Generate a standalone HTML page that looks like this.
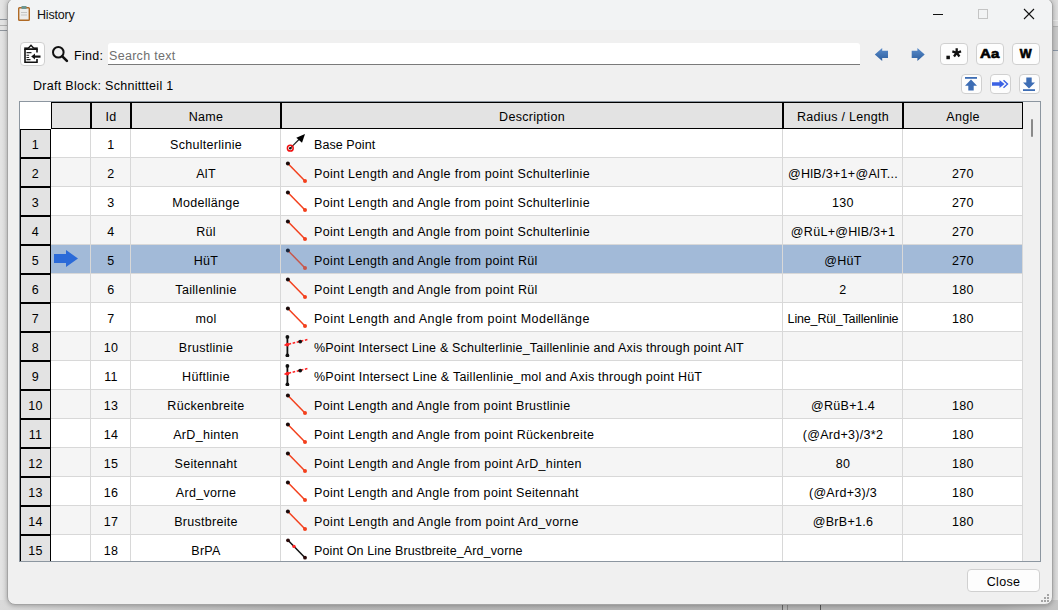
<!DOCTYPE html><html><head><meta charset="utf-8"><style>
*{box-sizing:border-box;margin:0;padding:0}
html,body{width:1058px;height:610px;overflow:hidden;background:#dcdcdc;font-family:"Liberation Sans",sans-serif;font-size:12.5px;color:#000}
.a{position:absolute}
.t{position:absolute;white-space:nowrap;letter-spacing:0.3px;line-height:15px}
.btn{position:absolute;background:#fdfdfd;border:1px solid #d0d0d0;border-radius:4px}
</style></head><body>

<div class="a" style="left:0;top:0;width:1058px;height:610px;background:linear-gradient(90deg,#e4e4e4 0,#dadada 7px,#dadada 1050px,#d6d6d6 1053px,#dcdcdc 1058px)"></div>
<div class="a" style="left:0;top:19px;width:8px;height:12px;background:#e2e2e2;border-top:1px solid #8f959c;border-bottom:1px solid #8f959c"></div>
<div class="a" style="left:0;top:25px;width:8px;height:1px;background:#b0b0b0"></div>
<div class="a" style="left:1050px;top:20px;width:8px;height:1px;background:#e8e8e8"></div>
<div class="a" style="left:1050px;top:26px;width:8px;height:25px;background:#c8c8c8;border-top:1px solid #b0b0b0;border-bottom:1px solid #8a96a6"></div>
<div class="a" style="left:0;top:600px;width:1058px;height:10px;background:linear-gradient(90deg,#dadada 0,#cbcbcb 100px,#b8b8b8 280px,#b4b4b4 1000px,#c4c4c4 1058px)"></div>
<div class="a" style="left:782px;top:600px;width:1px;height:10px;background:#666"></div>
<div class="a" style="left:787px;top:600px;width:1px;height:10px;background:#888"></div>
<div class="a" style="left:820px;top:600px;width:1px;height:10px;background:#555"></div>
<div class="a" style="left:7px;top:-2px;width:1046px;height:607px;background:#f0f0f0;border:1px solid #a4a4a4;border-radius:8px;overflow:hidden;box-shadow:0 1px 4px rgba(0,0,0,0.25)">
<div class="a" style="left:0;top:0;width:1046px;height:31px;background:#f2f3f4"></div>
</div>
<svg class="a" style="left:18px;top:6px" width="12" height="15" viewBox="0 0 12 15"><rect x="0.7" y="1.7" width="10.6" height="12.6" rx="0.8" fill="#ececec" stroke="#b06a25" stroke-width="1.4"/><rect x="3.5" y="0" width="5" height="3" fill="#6e9690"/><line x1="3" y1="6.5" x2="9" y2="6.5" stroke="#c4c4c4"/><line x1="3" y1="9" x2="9" y2="9" stroke="#c4c4c4"/></svg>
<div class="t" style="left:37px;top:8px;font-size:12.5px;letter-spacing:-0.2px;color:#111">History</div>
<div class="a" style="left:933px;top:14px;width:10px;height:1px;background:#111"></div>
<div class="a" style="left:978px;top:9px;width:10px;height:10px;border:1px solid #c4c4c4"></div>
<svg class="a" style="left:1023px;top:8px" width="12" height="12" viewBox="0 0 12 12"><path d="M1 1L11 11M11 1L1 11" stroke="#111" stroke-width="1.1"/></svg>
<div class="btn" style="left:20px;top:42px;width:25px;height:24px"></div>
<svg class="a" style="left:22px;top:43px" width="20" height="21" viewBox="0 0 20 21"><path d="M3 6v13.3h12v-3.3M15 9.5V6" fill="none" stroke="#111" stroke-width="1.6"/><rect x="2.2" y="4.4" width="13.6" height="2.6" fill="#111"/><path d="M6.3 5.2L9 2.2L11.7 5.2" fill="#fff" stroke="#111" stroke-width="1.4"/><path d="M4.5 9.6h5M4.5 12.3h2.6M4.5 14.5h2.6M4.5 16.6h4" stroke="#222" stroke-width="1.1"/><path d="M11 13.6h7.5" stroke="#111" stroke-width="2.2"/><path d="M9.2 13.6L13 10.6V16.6z" fill="#111"/></svg>
<svg class="a" style="left:50px;top:44px" width="20" height="20" viewBox="0 0 20 20"><circle cx="8.3" cy="8.2" r="5.3" fill="none" stroke="#111" stroke-width="2"/><path d="M12.3 12.3l4.6 4.6" stroke="#111" stroke-width="2.6" stroke-linecap="round"/></svg>
<div class="t" style="left:74px;top:49px">Find:</div>
<div class="a" style="left:108px;top:43px;width:752px;height:22px;background:#fff;border-bottom:1px solid #7a7a7a;border-radius:3px 3px 0 0"></div>
<div class="t" style="left:109px;top:49px;color:#6f6f6f">Search text</div>
<svg class="a" style="left:874px;top:47px" width="15" height="16" viewBox="0 0 15 16"><defs><linearGradient id="ag" x1="0" y1="0" x2="0" y2="1"><stop offset="0" stop-color="#5a8ccb"/><stop offset="1" stop-color="#2d5e9e"/></linearGradient></defs><path d="M0.8 7.5L8.2 1V3.8H14V10.9H8.2V14z" fill="url(#ag)"/></svg>
<svg class="a" style="left:911px;top:47px" width="15" height="16" viewBox="0 0 15 16"><path d="M13.7 7.5L6.4 1V3.8H0.7V10.9H6.4V14z" fill="url(#ag)"/></svg>
<div class="btn" style="left:940px;top:43px;width:28px;height:22px"></div>
<div class="a" style="left:940px;top:47px;width:28px;text-align:center;font-weight:bold;font-size:12px;line-height:14px;-webkit-text-stroke:0.6px #000"><span style="display:inline-block;transform:scaleX(1.0)"></span></div>
<div class="btn" style="left:976px;top:43px;width:28px;height:22px"></div>
<div class="a" style="left:976px;top:47px;width:28px;text-align:center;font-weight:bold;font-size:12px;line-height:14px;-webkit-text-stroke:0.6px #000"><span style="display:inline-block;transform:scaleX(1.25)">Aa</span></div>
<div class="btn" style="left:1012px;top:43px;width:28px;height:22px"></div>
<div class="a" style="left:1012px;top:47px;width:28px;text-align:center;font-weight:bold;font-size:12px;line-height:14px;-webkit-text-stroke:0.6px #000"><span style="display:inline-block;transform:scaleX(1.05)">W</span></div>
<svg class="a" style="left:944px;top:46px" width="20" height="16" viewBox="0 0 20 16"><rect x="2.4" y="9.7" width="3.5" height="3.5" fill="#111"/><path d="M12.7 6.8L12.70 2.20M12.7 6.8L17.07 5.38M12.7 6.8L15.40 10.52M12.7 6.8L10.00 10.52M12.7 6.8L8.33 5.38" stroke="#111" stroke-width="2.3"/></svg>
<div class="t" style="left:33px;top:79px">Draft Block:</div>
<div class="t" style="left:105px;top:79px">Schnittteil 1</div>
<div class="btn" style="left:961px;top:74px;width:21px;height:20px"></div>
<div class="btn" style="left:990px;top:74px;width:21px;height:20px"></div>
<div class="btn" style="left:1019px;top:74px;width:21px;height:20px"></div>
<svg class="a" style="left:964px;top:77px" width="14" height="14" viewBox="0 0 14 14"><rect x="1" y="0" width="12" height="1.8" fill="#3d6db4"/><path d="M7 2.5L1 8.8h3.3V13.5h5.4V8.8H13z" fill="#3d6db4"/></svg>
<svg class="a" style="left:991px;top:77px" width="18" height="14" viewBox="0 0 18 14"><path d="M1 5.3h7.5V3l5 4-5 4V8.8H1z" fill="#3b62e4"/><path d="M12.5 3.3l4 3.7-4 3.7" fill="none" stroke="#3b62e4" stroke-width="1.4"/></svg>
<svg class="a" style="left:1022px;top:77px" width="14" height="14" viewBox="0 0 14 14"><rect x="1" y="12.2" width="12" height="1.8" fill="#3d6db4"/><path d="M7 11.5L1 5.5h3.3V0.5h5.4V5.5H13z" fill="#3d6db4"/></svg>
<div class="a" style="left:19px;top:101px;width:1022px;height:461px;border:1px solid #8c96a0;background:#f0f0f0"></div>
<div class="a" style="left:20px;top:102px;width:31px;height:27px;background:#fff"></div>
<div class="a" style="left:51px;top:102px;width:40px;height:27px;background:#e3e3e3;border:1px solid #000"></div>
<div class="a" style="left:91px;top:102px;width:40px;height:27px;background:#e3e3e3;border:1px solid #000"></div>
<div class="t" style="left:91px;top:110px;width:40px;text-align:center">Id</div>
<div class="a" style="left:131px;top:102px;width:150px;height:27px;background:#e3e3e3;border:1px solid #000"></div>
<div class="t" style="left:131px;top:110px;width:150px;text-align:center">Name</div>
<div class="a" style="left:281px;top:102px;width:502px;height:27px;background:#e3e3e3;border:1px solid #000"></div>
<div class="t" style="left:281px;top:110px;width:502px;text-align:center">Description</div>
<div class="a" style="left:783px;top:102px;width:120px;height:27px;background:#e3e3e3;border:1px solid #000"></div>
<div class="t" style="left:783px;top:110px;width:120px;text-align:center">Radius / Length</div>
<div class="a" style="left:903px;top:102px;width:120px;height:27px;background:#e3e3e3;border:1px solid #000"></div>
<div class="t" style="left:903px;top:110px;width:120px;text-align:center">Angle</div>
<div class="a" style="left:20px;top:129px;width:1003px;height:432px;overflow:hidden">
<div class="a" style="left:31px;top:0px;width:972px;height:29px;background:#ffffff"></div>
<div class="a" style="left:31px;top:28px;width:972px;height:1px;background:#d8d8d8"></div>
<div class="a" style="left:70px;top:0px;width:1px;height:29px;background:#d8d8d8"></div>
<div class="a" style="left:110px;top:0px;width:1px;height:29px;background:#d8d8d8"></div>
<div class="a" style="left:260px;top:0px;width:1px;height:29px;background:#d8d8d8"></div>
<div class="a" style="left:762px;top:0px;width:1px;height:29px;background:#d8d8d8"></div>
<div class="a" style="left:882px;top:0px;width:1px;height:29px;background:#d8d8d8"></div>
<div class="a" style="left:1002px;top:0px;width:1px;height:29px;background:#d8d8d8"></div>
<div class="a" style="left:0;top:0px;width:31px;height:29px;background:#e3e3e3;border:1px solid #000"></div>
<div class="t" style="left:0;top:9px;width:31px;text-align:center">1</div>
<div class="t" style="left:71px;top:9px;width:40px;text-align:center">1</div>
<div class="t" style="left:111px;top:9px;width:150px;text-align:center">Schulterlinie</div>
<div class="a" style="left:264px;top:3px;width:26px;height:22px"><svg width="26" height="22" viewBox="0 0 26 22"><line x1="6.3" y1="16.2" x2="15.5" y2="7" stroke="#222" stroke-width="1.2"/><polygon points="21,2 12.3,5.8 18,10.8" fill="#000"/><circle cx="6.3" cy="16.2" r="2.9" fill="none" stroke="#f01010" stroke-width="1.5"/><circle cx="6.3" cy="16.2" r="1.3" fill="#111"/></svg></div>
<div class="t" style="left:294px;top:9px;letter-spacing:0.078px">Base Point</div>
<div class="t" style="left:763px;top:9px;width:120px;text-align:center"></div>
<div class="t" style="left:883px;top:9px;width:120px;text-align:center"></div>
<div class="a" style="left:31px;top:29px;width:972px;height:29px;background:#f5f5f5"></div>
<div class="a" style="left:31px;top:57px;width:972px;height:1px;background:#d8d8d8"></div>
<div class="a" style="left:70px;top:29px;width:1px;height:29px;background:#d8d8d8"></div>
<div class="a" style="left:110px;top:29px;width:1px;height:29px;background:#d8d8d8"></div>
<div class="a" style="left:260px;top:29px;width:1px;height:29px;background:#d8d8d8"></div>
<div class="a" style="left:762px;top:29px;width:1px;height:29px;background:#d8d8d8"></div>
<div class="a" style="left:882px;top:29px;width:1px;height:29px;background:#d8d8d8"></div>
<div class="a" style="left:1002px;top:29px;width:1px;height:29px;background:#d8d8d8"></div>
<div class="a" style="left:0;top:29px;width:31px;height:29px;background:#e3e3e3;border:1px solid #000"></div>
<div class="t" style="left:0;top:38px;width:31px;text-align:center">2</div>
<div class="t" style="left:71px;top:38px;width:40px;text-align:center">2</div>
<div class="t" style="left:111px;top:38px;width:150px;text-align:center">AlT</div>
<div class="a" style="left:264px;top:32px;width:26px;height:22px"><svg width="26" height="22" viewBox="0 0 26 22"><line x1="3.9" y1="2.4" x2="21" y2="20" stroke="#f3401d" stroke-width="1.5"/><circle cx="3.9" cy="2.4" r="2" fill="#1a0a0a"/><circle cx="21" cy="20" r="2" fill="#f3401d"/></svg></div>
<div class="t" style="left:294px;top:38px;letter-spacing:0.343px">Point Length and Angle from point Schulterlinie</div>
<div class="t" style="left:763px;top:38px;width:120px;text-align:center">@HlB/3+1+@AlT...</div>
<div class="t" style="left:883px;top:38px;width:120px;text-align:center">270</div>
<div class="a" style="left:31px;top:58px;width:972px;height:29px;background:#ffffff"></div>
<div class="a" style="left:31px;top:86px;width:972px;height:1px;background:#d8d8d8"></div>
<div class="a" style="left:70px;top:58px;width:1px;height:29px;background:#d8d8d8"></div>
<div class="a" style="left:110px;top:58px;width:1px;height:29px;background:#d8d8d8"></div>
<div class="a" style="left:260px;top:58px;width:1px;height:29px;background:#d8d8d8"></div>
<div class="a" style="left:762px;top:58px;width:1px;height:29px;background:#d8d8d8"></div>
<div class="a" style="left:882px;top:58px;width:1px;height:29px;background:#d8d8d8"></div>
<div class="a" style="left:1002px;top:58px;width:1px;height:29px;background:#d8d8d8"></div>
<div class="a" style="left:0;top:58px;width:31px;height:29px;background:#e3e3e3;border:1px solid #000"></div>
<div class="t" style="left:0;top:67px;width:31px;text-align:center">3</div>
<div class="t" style="left:71px;top:67px;width:40px;text-align:center">3</div>
<div class="t" style="left:111px;top:67px;width:150px;text-align:center">Modellänge</div>
<div class="a" style="left:264px;top:61px;width:26px;height:22px"><svg width="26" height="22" viewBox="0 0 26 22"><line x1="3.9" y1="2.4" x2="21" y2="20" stroke="#f3401d" stroke-width="1.5"/><circle cx="3.9" cy="2.4" r="2" fill="#1a0a0a"/><circle cx="21" cy="20" r="2" fill="#f3401d"/></svg></div>
<div class="t" style="left:294px;top:67px;letter-spacing:0.343px">Point Length and Angle from point Schulterlinie</div>
<div class="t" style="left:763px;top:67px;width:120px;text-align:center">130</div>
<div class="t" style="left:883px;top:67px;width:120px;text-align:center">270</div>
<div class="a" style="left:31px;top:87px;width:972px;height:29px;background:#f5f5f5"></div>
<div class="a" style="left:31px;top:115px;width:972px;height:1px;background:#d8d8d8"></div>
<div class="a" style="left:70px;top:87px;width:1px;height:29px;background:#d8d8d8"></div>
<div class="a" style="left:110px;top:87px;width:1px;height:29px;background:#d8d8d8"></div>
<div class="a" style="left:260px;top:87px;width:1px;height:29px;background:#d8d8d8"></div>
<div class="a" style="left:762px;top:87px;width:1px;height:29px;background:#d8d8d8"></div>
<div class="a" style="left:882px;top:87px;width:1px;height:29px;background:#d8d8d8"></div>
<div class="a" style="left:1002px;top:87px;width:1px;height:29px;background:#d8d8d8"></div>
<div class="a" style="left:0;top:87px;width:31px;height:29px;background:#e3e3e3;border:1px solid #000"></div>
<div class="t" style="left:0;top:96px;width:31px;text-align:center">4</div>
<div class="t" style="left:71px;top:96px;width:40px;text-align:center">4</div>
<div class="t" style="left:111px;top:96px;width:150px;text-align:center">Rül</div>
<div class="a" style="left:264px;top:90px;width:26px;height:22px"><svg width="26" height="22" viewBox="0 0 26 22"><line x1="3.9" y1="2.4" x2="21" y2="20" stroke="#f3401d" stroke-width="1.5"/><circle cx="3.9" cy="2.4" r="2" fill="#1a0a0a"/><circle cx="21" cy="20" r="2" fill="#f3401d"/></svg></div>
<div class="t" style="left:294px;top:96px;letter-spacing:0.343px">Point Length and Angle from point Schulterlinie</div>
<div class="t" style="left:763px;top:96px;width:120px;text-align:center">@RüL+@HlB/3+1</div>
<div class="t" style="left:883px;top:96px;width:120px;text-align:center">270</div>
<div class="a" style="left:31px;top:116px;width:972px;height:29px;background:#a2bad8"></div>
<div class="a" style="left:31px;top:144px;width:972px;height:1px;background:#d8d8d8"></div>
<div class="a" style="left:70px;top:116px;width:1px;height:29px;background:#d8d8d8"></div>
<div class="a" style="left:110px;top:116px;width:1px;height:29px;background:#d8d8d8"></div>
<div class="a" style="left:260px;top:116px;width:1px;height:29px;background:#d8d8d8"></div>
<div class="a" style="left:762px;top:116px;width:1px;height:29px;background:#d8d8d8"></div>
<div class="a" style="left:882px;top:116px;width:1px;height:29px;background:#d8d8d8"></div>
<div class="a" style="left:1002px;top:116px;width:1px;height:29px;background:#d8d8d8"></div>
<div class="a" style="left:0;top:116px;width:31px;height:29px;background:#e3e3e3;border:1px solid #000"></div>
<div class="t" style="left:0;top:125px;width:31px;text-align:center">5</div>
<svg class="a" style="left:34px;top:121px" width="25" height="18" viewBox="0 0 25 18"><path d="M0 4h12V0l12 8.5L12 17v-4H0z" fill="#2b6ad8"/></svg>
<div class="t" style="left:71px;top:125px;width:40px;text-align:center">5</div>
<div class="t" style="left:111px;top:125px;width:150px;text-align:center">HüT</div>
<div class="a" style="left:264px;top:119px;width:26px;height:22px"><svg width="26" height="22" viewBox="0 0 26 22"><line x1="3.9" y1="2.4" x2="21" y2="20" stroke="#c8574b" stroke-width="1.5"/><circle cx="3.9" cy="2.4" r="2" fill="#18243a"/><circle cx="21" cy="20" r="2" fill="#c8574b"/></svg></div>
<div class="t" style="left:294px;top:125px;letter-spacing:0.356px">Point Length and Angle from point Rül</div>
<div class="t" style="left:763px;top:125px;width:120px;text-align:center">@HüT</div>
<div class="t" style="left:883px;top:125px;width:120px;text-align:center">270</div>
<div class="a" style="left:31px;top:145px;width:972px;height:29px;background:#f5f5f5"></div>
<div class="a" style="left:31px;top:173px;width:972px;height:1px;background:#d8d8d8"></div>
<div class="a" style="left:70px;top:145px;width:1px;height:29px;background:#d8d8d8"></div>
<div class="a" style="left:110px;top:145px;width:1px;height:29px;background:#d8d8d8"></div>
<div class="a" style="left:260px;top:145px;width:1px;height:29px;background:#d8d8d8"></div>
<div class="a" style="left:762px;top:145px;width:1px;height:29px;background:#d8d8d8"></div>
<div class="a" style="left:882px;top:145px;width:1px;height:29px;background:#d8d8d8"></div>
<div class="a" style="left:1002px;top:145px;width:1px;height:29px;background:#d8d8d8"></div>
<div class="a" style="left:0;top:145px;width:31px;height:29px;background:#e3e3e3;border:1px solid #000"></div>
<div class="t" style="left:0;top:154px;width:31px;text-align:center">6</div>
<div class="t" style="left:71px;top:154px;width:40px;text-align:center">6</div>
<div class="t" style="left:111px;top:154px;width:150px;text-align:center">Taillenlinie</div>
<div class="a" style="left:264px;top:148px;width:26px;height:22px"><svg width="26" height="22" viewBox="0 0 26 22"><line x1="3.9" y1="2.4" x2="21" y2="20" stroke="#f3401d" stroke-width="1.5"/><circle cx="3.9" cy="2.4" r="2" fill="#1a0a0a"/><circle cx="21" cy="20" r="2" fill="#f3401d"/></svg></div>
<div class="t" style="left:294px;top:154px;letter-spacing:0.356px">Point Length and Angle from point Rül</div>
<div class="t" style="left:763px;top:154px;width:120px;text-align:center">2</div>
<div class="t" style="left:883px;top:154px;width:120px;text-align:center">180</div>
<div class="a" style="left:31px;top:174px;width:972px;height:29px;background:#ffffff"></div>
<div class="a" style="left:31px;top:202px;width:972px;height:1px;background:#d8d8d8"></div>
<div class="a" style="left:70px;top:174px;width:1px;height:29px;background:#d8d8d8"></div>
<div class="a" style="left:110px;top:174px;width:1px;height:29px;background:#d8d8d8"></div>
<div class="a" style="left:260px;top:174px;width:1px;height:29px;background:#d8d8d8"></div>
<div class="a" style="left:762px;top:174px;width:1px;height:29px;background:#d8d8d8"></div>
<div class="a" style="left:882px;top:174px;width:1px;height:29px;background:#d8d8d8"></div>
<div class="a" style="left:1002px;top:174px;width:1px;height:29px;background:#d8d8d8"></div>
<div class="a" style="left:0;top:174px;width:31px;height:29px;background:#e3e3e3;border:1px solid #000"></div>
<div class="t" style="left:0;top:183px;width:31px;text-align:center">7</div>
<div class="t" style="left:71px;top:183px;width:40px;text-align:center">7</div>
<div class="t" style="left:111px;top:183px;width:150px;text-align:center">mol</div>
<div class="a" style="left:264px;top:177px;width:26px;height:22px"><svg width="26" height="22" viewBox="0 0 26 22"><line x1="3.9" y1="2.4" x2="21" y2="20" stroke="#f3401d" stroke-width="1.5"/><circle cx="3.9" cy="2.4" r="2" fill="#1a0a0a"/><circle cx="21" cy="20" r="2" fill="#f3401d"/></svg></div>
<div class="t" style="left:294px;top:183px;letter-spacing:0.440px">Point Length and Angle from point Modellänge</div>
<div class="t" style="left:763px;top:183px;width:120px;text-align:center;letter-spacing:-0.15px">Line_Rül_Taillenlinie</div>
<div class="t" style="left:883px;top:183px;width:120px;text-align:center">180</div>
<div class="a" style="left:31px;top:203px;width:972px;height:29px;background:#f5f5f5"></div>
<div class="a" style="left:31px;top:231px;width:972px;height:1px;background:#d8d8d8"></div>
<div class="a" style="left:70px;top:203px;width:1px;height:29px;background:#d8d8d8"></div>
<div class="a" style="left:110px;top:203px;width:1px;height:29px;background:#d8d8d8"></div>
<div class="a" style="left:260px;top:203px;width:1px;height:29px;background:#d8d8d8"></div>
<div class="a" style="left:762px;top:203px;width:1px;height:29px;background:#d8d8d8"></div>
<div class="a" style="left:882px;top:203px;width:1px;height:29px;background:#d8d8d8"></div>
<div class="a" style="left:1002px;top:203px;width:1px;height:29px;background:#d8d8d8"></div>
<div class="a" style="left:0;top:203px;width:31px;height:29px;background:#e3e3e3;border:1px solid #000"></div>
<div class="t" style="left:0;top:212px;width:31px;text-align:center">8</div>
<div class="t" style="left:71px;top:212px;width:40px;text-align:center">10</div>
<div class="t" style="left:111px;top:212px;width:150px;text-align:center">Brustlinie</div>
<div class="a" style="left:264px;top:206px;width:26px;height:22px"><svg width="26" height="22" viewBox="0 0 26 22"><line x1="3.4" y1="1.5" x2="3.4" y2="20.5" stroke="#111" stroke-width="1.8"/><circle cx="3.4" cy="1.9" r="1.9" fill="#111"/><circle cx="3.4" cy="20.4" r="1.9" fill="#111"/><line x1="0.5" y1="10.2" x2="24" y2="4.4" stroke="#f22" stroke-width="1.6" stroke-dasharray="2.6,1.6"/><circle cx="3.4" cy="9.6" r="1.9" fill="#f22"/><circle cx="16.2" cy="6.6" r="1.9" fill="#111"/></svg></div>
<div class="t" style="left:294px;top:212px;letter-spacing:0.195px">%Point Intersect Line &amp; Schulterlinie_Taillenlinie and Axis through point AlT</div>
<div class="t" style="left:763px;top:212px;width:120px;text-align:center"></div>
<div class="t" style="left:883px;top:212px;width:120px;text-align:center"></div>
<div class="a" style="left:31px;top:232px;width:972px;height:29px;background:#ffffff"></div>
<div class="a" style="left:31px;top:260px;width:972px;height:1px;background:#d8d8d8"></div>
<div class="a" style="left:70px;top:232px;width:1px;height:29px;background:#d8d8d8"></div>
<div class="a" style="left:110px;top:232px;width:1px;height:29px;background:#d8d8d8"></div>
<div class="a" style="left:260px;top:232px;width:1px;height:29px;background:#d8d8d8"></div>
<div class="a" style="left:762px;top:232px;width:1px;height:29px;background:#d8d8d8"></div>
<div class="a" style="left:882px;top:232px;width:1px;height:29px;background:#d8d8d8"></div>
<div class="a" style="left:1002px;top:232px;width:1px;height:29px;background:#d8d8d8"></div>
<div class="a" style="left:0;top:232px;width:31px;height:29px;background:#e3e3e3;border:1px solid #000"></div>
<div class="t" style="left:0;top:241px;width:31px;text-align:center">9</div>
<div class="t" style="left:71px;top:241px;width:40px;text-align:center">11</div>
<div class="t" style="left:111px;top:241px;width:150px;text-align:center">Hüftlinie</div>
<div class="a" style="left:264px;top:235px;width:26px;height:22px"><svg width="26" height="22" viewBox="0 0 26 22"><line x1="3.4" y1="1.5" x2="3.4" y2="20.5" stroke="#111" stroke-width="1.8"/><circle cx="3.4" cy="1.9" r="1.9" fill="#111"/><circle cx="3.4" cy="20.4" r="1.9" fill="#111"/><line x1="0.5" y1="10.2" x2="24" y2="4.4" stroke="#f22" stroke-width="1.6" stroke-dasharray="2.6,1.6"/><circle cx="3.4" cy="9.6" r="1.9" fill="#f22"/><circle cx="16.2" cy="6.6" r="1.9" fill="#111"/></svg></div>
<div class="t" style="left:294px;top:241px;letter-spacing:0.239px">%Point Intersect Line &amp; Taillenlinie_mol and Axis through point HüT</div>
<div class="t" style="left:763px;top:241px;width:120px;text-align:center"></div>
<div class="t" style="left:883px;top:241px;width:120px;text-align:center"></div>
<div class="a" style="left:31px;top:261px;width:972px;height:29px;background:#f5f5f5"></div>
<div class="a" style="left:31px;top:289px;width:972px;height:1px;background:#d8d8d8"></div>
<div class="a" style="left:70px;top:261px;width:1px;height:29px;background:#d8d8d8"></div>
<div class="a" style="left:110px;top:261px;width:1px;height:29px;background:#d8d8d8"></div>
<div class="a" style="left:260px;top:261px;width:1px;height:29px;background:#d8d8d8"></div>
<div class="a" style="left:762px;top:261px;width:1px;height:29px;background:#d8d8d8"></div>
<div class="a" style="left:882px;top:261px;width:1px;height:29px;background:#d8d8d8"></div>
<div class="a" style="left:1002px;top:261px;width:1px;height:29px;background:#d8d8d8"></div>
<div class="a" style="left:0;top:261px;width:31px;height:29px;background:#e3e3e3;border:1px solid #000"></div>
<div class="t" style="left:0;top:270px;width:31px;text-align:center">10</div>
<div class="t" style="left:71px;top:270px;width:40px;text-align:center">13</div>
<div class="t" style="left:111px;top:270px;width:150px;text-align:center">Rückenbreite</div>
<div class="a" style="left:264px;top:264px;width:26px;height:22px"><svg width="26" height="22" viewBox="0 0 26 22"><line x1="3.9" y1="2.4" x2="21" y2="20" stroke="#f3401d" stroke-width="1.5"/><circle cx="3.9" cy="2.4" r="2" fill="#1a0a0a"/><circle cx="21" cy="20" r="2" fill="#f3401d"/></svg></div>
<div class="t" style="left:294px;top:270px;letter-spacing:0.300px">Point Length and Angle from point Brustlinie</div>
<div class="t" style="left:763px;top:270px;width:120px;text-align:center">@RüB+1.4</div>
<div class="t" style="left:883px;top:270px;width:120px;text-align:center">180</div>
<div class="a" style="left:31px;top:290px;width:972px;height:29px;background:#ffffff"></div>
<div class="a" style="left:31px;top:318px;width:972px;height:1px;background:#d8d8d8"></div>
<div class="a" style="left:70px;top:290px;width:1px;height:29px;background:#d8d8d8"></div>
<div class="a" style="left:110px;top:290px;width:1px;height:29px;background:#d8d8d8"></div>
<div class="a" style="left:260px;top:290px;width:1px;height:29px;background:#d8d8d8"></div>
<div class="a" style="left:762px;top:290px;width:1px;height:29px;background:#d8d8d8"></div>
<div class="a" style="left:882px;top:290px;width:1px;height:29px;background:#d8d8d8"></div>
<div class="a" style="left:1002px;top:290px;width:1px;height:29px;background:#d8d8d8"></div>
<div class="a" style="left:0;top:290px;width:31px;height:29px;background:#e3e3e3;border:1px solid #000"></div>
<div class="t" style="left:0;top:299px;width:31px;text-align:center">11</div>
<div class="t" style="left:71px;top:299px;width:40px;text-align:center">14</div>
<div class="t" style="left:111px;top:299px;width:150px;text-align:center">ArD_hinten</div>
<div class="a" style="left:264px;top:293px;width:26px;height:22px"><svg width="26" height="22" viewBox="0 0 26 22"><line x1="3.9" y1="2.4" x2="21" y2="20" stroke="#f3401d" stroke-width="1.5"/><circle cx="3.9" cy="2.4" r="2" fill="#1a0a0a"/><circle cx="21" cy="20" r="2" fill="#f3401d"/></svg></div>
<div class="t" style="left:294px;top:299px;letter-spacing:0.322px">Point Length and Angle from point Rückenbreite</div>
<div class="t" style="left:763px;top:299px;width:120px;text-align:center">(@Ard+3)/3*2</div>
<div class="t" style="left:883px;top:299px;width:120px;text-align:center">180</div>
<div class="a" style="left:31px;top:319px;width:972px;height:29px;background:#f5f5f5"></div>
<div class="a" style="left:31px;top:347px;width:972px;height:1px;background:#d8d8d8"></div>
<div class="a" style="left:70px;top:319px;width:1px;height:29px;background:#d8d8d8"></div>
<div class="a" style="left:110px;top:319px;width:1px;height:29px;background:#d8d8d8"></div>
<div class="a" style="left:260px;top:319px;width:1px;height:29px;background:#d8d8d8"></div>
<div class="a" style="left:762px;top:319px;width:1px;height:29px;background:#d8d8d8"></div>
<div class="a" style="left:882px;top:319px;width:1px;height:29px;background:#d8d8d8"></div>
<div class="a" style="left:1002px;top:319px;width:1px;height:29px;background:#d8d8d8"></div>
<div class="a" style="left:0;top:319px;width:31px;height:29px;background:#e3e3e3;border:1px solid #000"></div>
<div class="t" style="left:0;top:328px;width:31px;text-align:center">12</div>
<div class="t" style="left:71px;top:328px;width:40px;text-align:center">15</div>
<div class="t" style="left:111px;top:328px;width:150px;text-align:center">Seitennaht</div>
<div class="a" style="left:264px;top:322px;width:26px;height:22px"><svg width="26" height="22" viewBox="0 0 26 22"><line x1="3.9" y1="2.4" x2="21" y2="20" stroke="#f3401d" stroke-width="1.5"/><circle cx="3.9" cy="2.4" r="2" fill="#1a0a0a"/><circle cx="21" cy="20" r="2" fill="#f3401d"/></svg></div>
<div class="t" style="left:294px;top:328px;letter-spacing:0.323px">Point Length and Angle from point ArD_hinten</div>
<div class="t" style="left:763px;top:328px;width:120px;text-align:center">80</div>
<div class="t" style="left:883px;top:328px;width:120px;text-align:center">180</div>
<div class="a" style="left:31px;top:348px;width:972px;height:29px;background:#ffffff"></div>
<div class="a" style="left:31px;top:376px;width:972px;height:1px;background:#d8d8d8"></div>
<div class="a" style="left:70px;top:348px;width:1px;height:29px;background:#d8d8d8"></div>
<div class="a" style="left:110px;top:348px;width:1px;height:29px;background:#d8d8d8"></div>
<div class="a" style="left:260px;top:348px;width:1px;height:29px;background:#d8d8d8"></div>
<div class="a" style="left:762px;top:348px;width:1px;height:29px;background:#d8d8d8"></div>
<div class="a" style="left:882px;top:348px;width:1px;height:29px;background:#d8d8d8"></div>
<div class="a" style="left:1002px;top:348px;width:1px;height:29px;background:#d8d8d8"></div>
<div class="a" style="left:0;top:348px;width:31px;height:29px;background:#e3e3e3;border:1px solid #000"></div>
<div class="t" style="left:0;top:357px;width:31px;text-align:center">13</div>
<div class="t" style="left:71px;top:357px;width:40px;text-align:center">16</div>
<div class="t" style="left:111px;top:357px;width:150px;text-align:center">Ard_vorne</div>
<div class="a" style="left:264px;top:351px;width:26px;height:22px"><svg width="26" height="22" viewBox="0 0 26 22"><line x1="3.9" y1="2.4" x2="21" y2="20" stroke="#f3401d" stroke-width="1.5"/><circle cx="3.9" cy="2.4" r="2" fill="#1a0a0a"/><circle cx="21" cy="20" r="2" fill="#f3401d"/></svg></div>
<div class="t" style="left:294px;top:357px;letter-spacing:0.300px">Point Length and Angle from point Seitennaht</div>
<div class="t" style="left:763px;top:357px;width:120px;text-align:center">(@Ard+3)/3</div>
<div class="t" style="left:883px;top:357px;width:120px;text-align:center">180</div>
<div class="a" style="left:31px;top:377px;width:972px;height:29px;background:#f5f5f5"></div>
<div class="a" style="left:31px;top:405px;width:972px;height:1px;background:#d8d8d8"></div>
<div class="a" style="left:70px;top:377px;width:1px;height:29px;background:#d8d8d8"></div>
<div class="a" style="left:110px;top:377px;width:1px;height:29px;background:#d8d8d8"></div>
<div class="a" style="left:260px;top:377px;width:1px;height:29px;background:#d8d8d8"></div>
<div class="a" style="left:762px;top:377px;width:1px;height:29px;background:#d8d8d8"></div>
<div class="a" style="left:882px;top:377px;width:1px;height:29px;background:#d8d8d8"></div>
<div class="a" style="left:1002px;top:377px;width:1px;height:29px;background:#d8d8d8"></div>
<div class="a" style="left:0;top:377px;width:31px;height:29px;background:#e3e3e3;border:1px solid #000"></div>
<div class="t" style="left:0;top:386px;width:31px;text-align:center">14</div>
<div class="t" style="left:71px;top:386px;width:40px;text-align:center">17</div>
<div class="t" style="left:111px;top:386px;width:150px;text-align:center">Brustbreite</div>
<div class="a" style="left:264px;top:380px;width:26px;height:22px"><svg width="26" height="22" viewBox="0 0 26 22"><line x1="3.9" y1="2.4" x2="21" y2="20" stroke="#f3401d" stroke-width="1.5"/><circle cx="3.9" cy="2.4" r="2" fill="#1a0a0a"/><circle cx="21" cy="20" r="2" fill="#f3401d"/></svg></div>
<div class="t" style="left:294px;top:386px;letter-spacing:0.371px">Point Length and Angle from point Ard_vorne</div>
<div class="t" style="left:763px;top:386px;width:120px;text-align:center">@BrB+1.6</div>
<div class="t" style="left:883px;top:386px;width:120px;text-align:center">180</div>
<div class="a" style="left:31px;top:406px;width:972px;height:29px;background:#ffffff"></div>
<div class="a" style="left:31px;top:434px;width:972px;height:1px;background:#d8d8d8"></div>
<div class="a" style="left:70px;top:406px;width:1px;height:29px;background:#d8d8d8"></div>
<div class="a" style="left:110px;top:406px;width:1px;height:29px;background:#d8d8d8"></div>
<div class="a" style="left:260px;top:406px;width:1px;height:29px;background:#d8d8d8"></div>
<div class="a" style="left:762px;top:406px;width:1px;height:29px;background:#d8d8d8"></div>
<div class="a" style="left:882px;top:406px;width:1px;height:29px;background:#d8d8d8"></div>
<div class="a" style="left:1002px;top:406px;width:1px;height:29px;background:#d8d8d8"></div>
<div class="a" style="left:0;top:406px;width:31px;height:29px;background:#e3e3e3;border:1px solid #000"></div>
<div class="t" style="left:0;top:415px;width:31px;text-align:center">15</div>
<div class="t" style="left:71px;top:415px;width:40px;text-align:center">18</div>
<div class="t" style="left:111px;top:415px;width:150px;text-align:center">BrPA</div>
<div class="a" style="left:264px;top:409px;width:26px;height:22px"><svg width="26" height="22" viewBox="0 0 26 22"><line x1="4" y1="2.3" x2="21" y2="19.7" stroke="#111" stroke-width="1.5"/><circle cx="4" cy="2.3" r="1.9" fill="#2a0a0a"/><circle cx="10" cy="8.4" r="1.7" fill="#f22"/><circle cx="21" cy="19.7" r="1.9" fill="#2a0a0a"/></svg></div>
<div class="t" style="left:294px;top:415px;letter-spacing:0.124px">Point On Line Brustbreite_Ard_vorne</div>
<div class="t" style="left:763px;top:415px;width:120px;text-align:center"></div>
<div class="t" style="left:883px;top:415px;width:120px;text-align:center"></div>
</div>
<div class="a" style="left:1031px;top:119px;width:2px;height:18px;background:#8a8a8a;border-radius:1px"></div>
<div class="a" style="left:1047px;top:594px;width:2px;height:2px;background:#a4a4a4"></div>
<div class="a" style="left:1044px;top:597px;width:2px;height:2px;background:#a4a4a4"></div>
<div class="a" style="left:1047px;top:597px;width:2px;height:2px;background:#a4a4a4"></div>
<div class="a" style="left:1041px;top:600px;width:2px;height:2px;background:#a4a4a4"></div>
<div class="a" style="left:1044px;top:600px;width:2px;height:2px;background:#a4a4a4"></div>
<div class="a" style="left:1047px;top:600px;width:2px;height:2px;background:#a4a4a4"></div>
<div class="btn" style="left:967px;top:569px;width:73px;height:23px"></div>
<div class="t" style="left:967px;top:575px;width:73px;text-align:center">Close</div>
</body></html>
